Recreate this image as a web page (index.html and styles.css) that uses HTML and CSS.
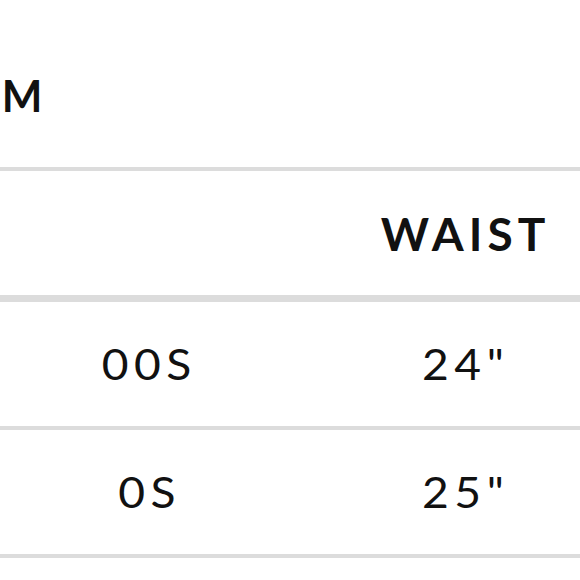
FILE: index.html
```html
<!DOCTYPE html>
<html>
<head>
<meta charset="utf-8">
<link rel="stylesheet" href="styles.css">
</head>
<body>
<div class="page">
  <h1 class="title">AM</h1>
  <div class="chart">
    <div class="row head">
      <div class="cell"></div>
      <div class="cell">WAIST</div>
    </div>
    <div class="row">
      <div class="cell"><span class="val">00S</span></div>
      <div class="cell"><span class="val">24"</span></div>
    </div>
    <div class="row">
      <div class="cell"><span class="val">0S</span></div>
      <div class="cell"><span class="val">25"</span></div>
    </div>
  </div>
</div>
</body>
</html>
```
FILE: styles.css
```css
html, body {
  margin: 0;
  padding: 0;
  background: #ffffff;
}
.page {
  width: 580px;
  height: 580px;
  overflow: hidden;
  font-family: Lato, "Open Sans", sans-serif;
  color: #111111;
}
.title {
  margin: 0 0 0 -31px;
  padding: 70px 0 0 0;
  height: 167px;
  box-sizing: border-box;
  font-size: 43px;
  font-weight: 700;
  letter-spacing: 3px;
  line-height: 52px;
  white-space: nowrap;
}
.chart {
  border-top: 4px solid #dcdcdc;
}
.row {
  display: grid;
  grid-template-columns: 294px 338px;
  height: 124px;
  border-bottom: 4px solid #dcdcdc;
}
.row.head {
  border-bottom-width: 7px;
}
.cell {
  display: flex;
  align-items: center;
  justify-content: center;
  font-size: 42px;
  letter-spacing: 5px;
  padding-left: 5px;
}
.val {
  display: inline-block;
  transform: scaleX(1.1);
}
.head .cell {
  font-weight: 700;
  font-size: 46px;
  letter-spacing: 5px;
  padding-left: 5px;
}
```
